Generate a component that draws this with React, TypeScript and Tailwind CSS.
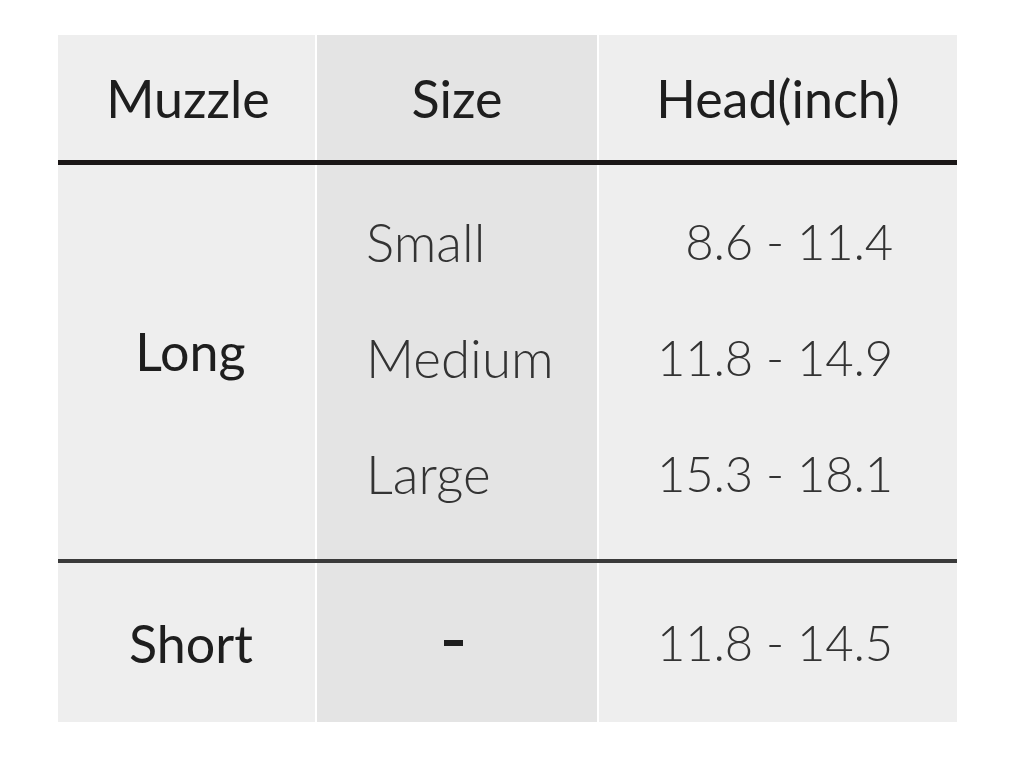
import React from "react";

const SIZES = [
  { size: "Small", head: "8.6 - 11.4" },
  { size: "Medium", head: "11.8 - 14.9" },
  { size: "Large", head: "15.3 - 18.1" },
];

export default function App() {
  return (
    <div
      className="min-h-screen w-full bg-white pl-[58px] pt-[35px]"
      style={{ fontFamily: "Lato, 'Open Sans', sans-serif" }}
    >
      <div className="grid w-fit grid-cols-[257px_280px_358px] gap-x-[2px] bg-white">
        {/* Header */}
        <div className="flex h-[125px] items-center justify-center bg-[#eeeeee] pl-[3px] text-[52px] font-normal text-[#1e1e1e]">
          Muzzle
        </div>
        <div className="flex h-[125px] items-center justify-center bg-[#e4e4e4] text-[52px] font-normal text-[#1e1e1e]">
          Size
        </div>
        <div className="flex h-[125px] items-center justify-center bg-[#eeeeee] text-[52px] font-normal text-[#1e1e1e]">
          Head(inch)
        </div>

        <div className="col-span-3 h-[5px] bg-[#1a1616]" />

        {/* Long */}
        <div className="flex h-[394px] items-center justify-center bg-[#eeeeee] pb-[22px] pl-[8px] text-[52px] font-normal text-[#1e1e1e]">
          Long
        </div>
        <div className="flex h-[394px] flex-col justify-center bg-[#e4e4e4] pb-[8px] pl-[49px]">
          {SIZES.map((r) => (
            <div
              key={r.size}
              className="flex h-[116px] items-center text-[53px] font-light text-[#333333]"
            >
              {r.size}
            </div>
          ))}
        </div>
        <div className="flex h-[394px] flex-col justify-center bg-[#eeeeee] pb-[8px] pr-[64px]">
          {SIZES.map((r) => (
            <div
              key={r.size}
              className="flex h-[116px] items-center justify-end text-[49px] font-light tracking-[-0.2px] text-[#333333]"
            >
              {r.head}
            </div>
          ))}
        </div>

        <div className="col-span-3 h-[4px] bg-[#3a3a3a]" />

        {/* Short */}
        <div className="flex h-[159px] items-center justify-center bg-[#eeeeee] pl-[9px] text-[52px] font-normal text-[#1e1e1e]">
          Short
        </div>
        <div className="flex h-[159px] items-center justify-center bg-[#e4e4e4] pr-[7px]">
          <span className="block h-[6px] w-[19px] bg-[#1e1e1e]" />
        </div>
        <div className="flex h-[159px] items-center justify-end bg-[#eeeeee] pr-[64px] text-[49px] font-light tracking-[-0.2px] text-[#333333]">
          11.8 - 14.5
        </div>
      </div>
    </div>
  );
}
